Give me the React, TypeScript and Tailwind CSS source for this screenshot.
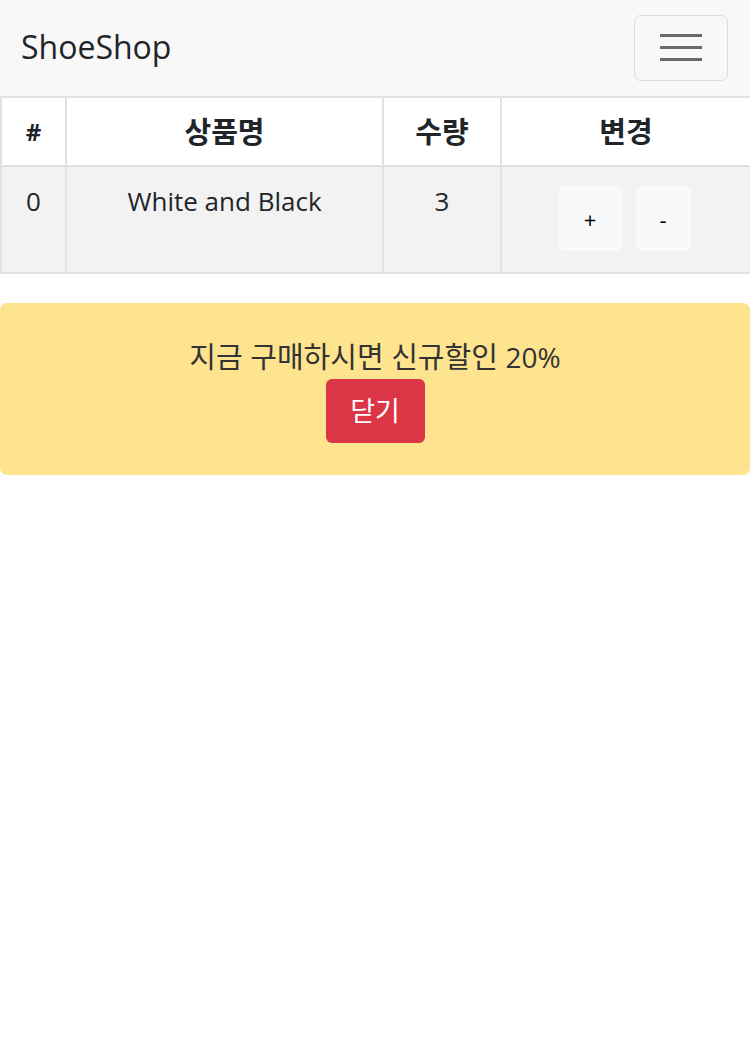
import React from 'react';

const font = { fontFamily: '"Open Sans", "Noto Sans CJK KR", sans-serif' };

export default function App() {
  return (
    <div className="w-[750px] min-h-[1050px] bg-white text-[#212529]" style={font}>
      {/* Navbar */}
      <nav className="h-[96px] bg-[#f8f8f8] flex items-center justify-between pl-[21px] pr-[22px]">
        <span className="text-[32px] leading-none text-[#212529] -mt-[2px]">ShoeShop</span>
        <button className="w-[94px] h-[66px] border border-[#dcdcdc] rounded-[7px] flex flex-col items-center justify-center gap-[9px] -mt-[1px]">
          <span className="block w-[42px] h-[3px] bg-[#6b6b6b]" />
          <span className="block w-[42px] h-[3px] bg-[#6b6b6b]" />
          <span className="block w-[42px] h-[3px] bg-[#6b6b6b]" />
        </button>
      </nav>

      {/* Table */}
      <table className="w-[750px] border-collapse text-[26px] table-fixed">
        <colgroup>
          <col className="w-[65px]" />
          <col className="w-[317px]" />
          <col className="w-[118px]" />
          <col className="w-[250px]" />
        </colgroup>
        <thead>
          <tr className="h-[69px] text-[29px] leading-[38px]">
            <th className="border-2 border-[#dee2e6] font-bold text-center text-[24px]">#</th>
            <th className="border-2 border-[#dee2e6] font-bold text-center">상품명</th>
            <th className="border-2 border-[#dee2e6] font-bold text-center">수량</th>
            <th className="border-2 border-[#dee2e6] font-bold text-center">변경</th>
          </tr>
        </thead>
        <tbody>
          <tr className="h-[107px] bg-[#f2f2f2] align-top leading-[38px]">
            <td className="border-2 border-[#dee2e6] text-center pt-[15px]">0</td>
            <td className="border-2 border-[#dee2e6] text-center pt-[15px]">White and Black</td>
            <td className="border-2 border-[#dee2e6] text-center pt-[15px]">3</td>
            <td className="border-2 border-[#dee2e6] pt-[20px]">
              <div className="flex justify-center gap-[14px] -mt-[1px] -ml-[3px]">
                <button className="w-[63px] h-[65px] bg-[#f8f9fa] rounded-[6px] text-[22px] text-black">+</button>
                <button className="w-[55px] h-[65px] bg-[#f8f9fa] rounded-[6px] text-[22px] text-black">-</button>
              </div>
            </td>
          </tr>
        </tbody>
      </table>

      {/* Alert */}
      <div className="mt-[29px] h-[172px] bg-[#ffe48f] rounded-[7px] flex flex-col items-center pt-[35px]">
        <p className="text-[28px] leading-[38px] text-[#333]">
          <span className="text-[29px]">지금 구매하시면 신규할인 </span>20%
        </p>
        <button className="mt-[3px] w-[99px] h-[64px] bg-[#dc3545] text-white rounded-[6px] text-[27px]">닫기</button>
      </div>
    </div>
  );
}
